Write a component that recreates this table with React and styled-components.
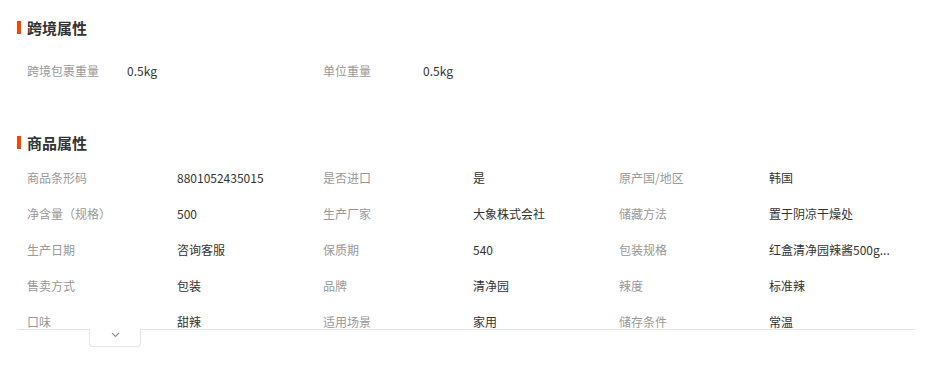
import React from "react";
import styled, { createGlobalStyle } from "styled-components";

const Global = createGlobalStyle`
  html, body { margin: 0; padding: 0; background: #fff; }
  body { font-family: "Noto Sans CJK SC", "Noto Sans", sans-serif; color: #333; }
`;

const Page = styled.div`
  padding: 17px 23px 0 17px;
  width: 938px;
  box-sizing: border-box;
`;

const Heading = styled.div`
  display: flex;
  align-items: center;
  gap: 6px;
  height: 21px;
  margin-top: ${(p) => p.$mt || 0}px;
  font-size: 15px;
  font-weight: 700;
  color: #333;
  line-height: 21px;
`;

const Bar = styled.span`
  width: 4px;
  height: 13px;
  background: #ff4400;
`;

const Grid = styled.div`
  display: grid;
  grid-template-columns: repeat(3, 1fr);
  padding-left: 10px;
  margin-top: ${(p) => p.$mt || 0}px;
  ${(p) =>
    p.$clip &&
    `
    max-height: 169px;
    overflow: hidden;
    border-bottom: 1px solid #e5e5e5;
  `}
`;

const Item = styled.div`
  display: flex;
  height: 36px;
  line-height: 36px;
  font-size: 12px;
  white-space: nowrap;
`;

const Label = styled.span`
  width: ${(p) => p.$w}px;
  flex: none;
  color: #999;
`;

const Value = styled.span`
  color: #333;
`;

const Toggle = styled.button`
  position: relative;
  display: flex;
  align-items: flex-start;
  justify-content: center;
  margin: -1px 0 0 72px;
  width: 52px;
  height: 18px;
  padding: 3px 0 0;
  background: #fff;
  border: 1px solid #e5e5e5;
  border-top: none;
  border-radius: 0 0 4px 4px;
  cursor: pointer;
`;

const cross = [
  ["跨境包裹重量", "0.5kg"],
  ["单位重量", "0.5kg"],
];

const attrs = [
  ["商品条形码", "8801052435015"],
  ["是否进口", "是"],
  ["原产国/地区", "韩国"],
  ["净含量（规格）", "500"],
  ["生产厂家", "大象株式会社"],
  ["储藏方法", "置于阴凉干燥处"],
  ["生产日期", "咨询客服"],
  ["保质期", "540"],
  ["包装规格", "红盒清净园辣酱500g..."],
  ["售卖方式", "包装"],
  ["品牌", "清净园"],
  ["辣度", "标准辣"],
  ["口味", "甜辣"],
  ["适用场景", "家用"],
  ["储存条件", "常温"],
];

export default function App() {
  return (
    <Page>
      <Global />
      <Heading>
        <Bar />
        跨境属性
      </Heading>
      <Grid $mt={15}>
        {cross.map(([l, v]) => (
          <Item key={l}>
            <Label $w={100}>{l}</Label>
            <Value>{v}</Value>
          </Item>
        ))}
      </Grid>
      <Heading $mt={43}>
        <Bar />
        商品属性
      </Heading>
      <Grid $mt={7} $clip>
        {attrs.map(([l, v]) => (
          <Item key={l}>
            <Label $w={150}>{l}</Label>
            <Value>{v}</Value>
          </Item>
        ))}
      </Grid>
      <Toggle aria-label="展开">
        <svg width="9" height="6" viewBox="0 0 9 6">
          <polyline points="1,1 4.5,4.5 8,1" fill="none" stroke="#8a93a6" strokeWidth="1.2" />
        </svg>
      </Toggle>
    </Page>
  );
}
